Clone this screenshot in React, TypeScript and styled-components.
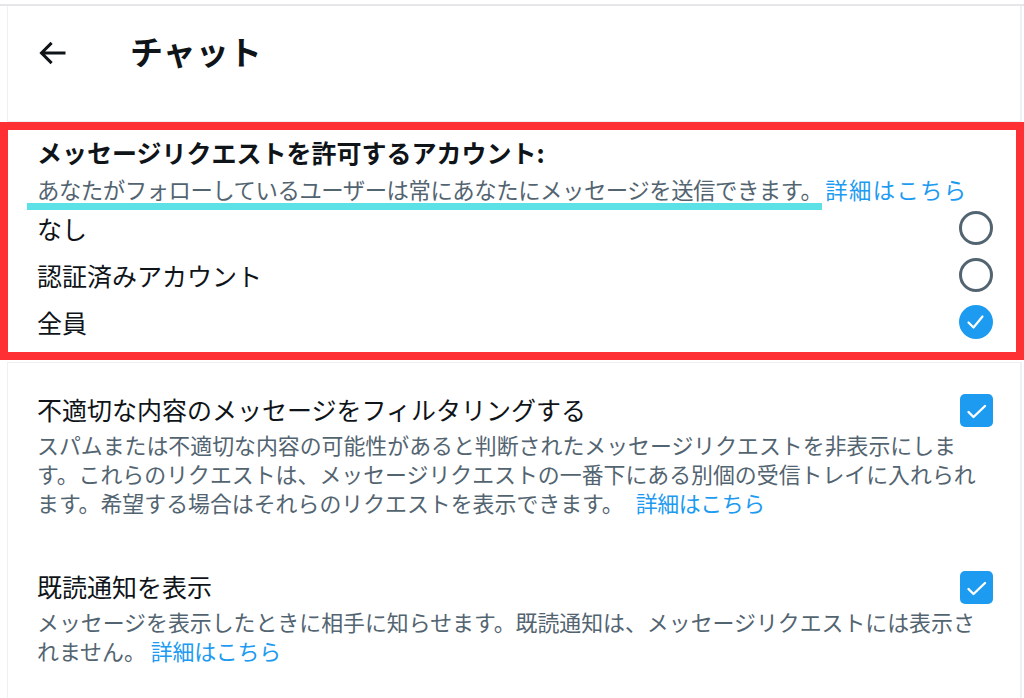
import React from "react";
import styled, { createGlobalStyle } from "styled-components";

const GlobalStyle = createGlobalStyle`
  *, *::before, *::after { box-sizing: border-box; }
  html, body { margin: 0; padding: 0; background: #ffffff; }
  body {
    font-family: "Noto Sans CJK JP", "Noto Sans", sans-serif;
    color: #0f1419;
  }
`;

const Page = styled.div`
  width: 1024px;
  min-height: 698px;
  padding-top: 4px;
  display: flex;
  flex-direction: column;
`;

const Viewport = styled.div`
  flex: 1;
  display: flex;
  flex-direction: column;
  border-top: 2px solid #e4e6e8;
`;

const Header = styled.header`
  margin: 0 2px 0 7px;
  height: 116px;
  border-left: 1px solid #eef1f3;
  border-right: 2px solid #eef1f3;
  border-bottom: 1px solid #eef1f3;
  padding: 25px 0 0 26px;
  display: flex;
  align-items: flex-start;
`;

const HeaderRow = styled.div`
  height: 40px;
  display: flex;
  align-items: center;
  gap: 60px;
`;

const BackIcon = styled.svg`
  width: 36px;
  height: 36px;
  margin-top: 4px;
  fill: #0f1419;
  flex: none;
`;

const Title = styled.h1`
  margin: 0;
  font-size: 33px;
  line-height: 40px;
  font-weight: 700;
  color: #0f1419;
`;

const Highlighted = styled.section`
  border: 8px solid #fe3033;
  padding: 5px 23px 7px 29px;
  display: flex;
  flex-direction: column;
`;

const GroupHeading = styled.h2`
  margin: 0;
  font-size: 25px;
  line-height: 34px;
  font-weight: 700;
  color: #0f1419;
`;

const GroupNote = styled.p`
  margin: 5px 0 0;
  font-size: 22.4px;
  line-height: 30px;
  color: #536471;
  white-space: nowrap;
`;

const Marked = styled.span`
  display: inline-block;
  position: relative;
  letter-spacing: -0.47px;
  &::after {
    content: "";
    position: absolute;
    left: -10px;
    right: 0;
    top: 29px;
    height: 7px;
    background: #5ce1e6;
  }
`;

const Link = styled.a<{ $gap: number; $track: number }>`
  color: #1d9bf0;
  text-decoration: none;
  margin-left: ${(p) => p.$gap}px;
  letter-spacing: ${(p) => p.$track}px;
  cursor: pointer;
`;

const Options = styled.div`
  display: flex;
  flex-direction: column;
`;

const OptionRow = styled.label`
  height: 47px;
  display: flex;
  align-items: center;
  justify-content: space-between;
  font-size: 25px;
  line-height: 34px;
  color: #0f1419;
`;

const RadioRing = styled.span`
  width: 34px;
  height: 34px;
  border-radius: 50%;
  border: 3px solid #536471;
  flex: none;
`;

const RadioOn = styled.svg`
  width: 34px;
  height: 34px;
  flex: none;
`;

const Lower = styled.div`
  flex: 1;
  margin: 2px 2px 0 7px;
  border-top: 1px solid #eef1f3;
  border-left: 1px solid #eef1f3;
  border-right: 2px solid #eef1f3;
  padding: 29px 27px 0 29px;
  display: flex;
  flex-direction: column;
  gap: 52px;
`;

const Setting = styled.div`
  display: flex;
  flex-direction: column;
`;

const SettingRow = styled.div`
  height: 34px;
  display: flex;
  align-items: center;
  justify-content: space-between;
`;

const SettingLabel = styled.span`
  font-size: 25px;
  line-height: 34px;
  color: #0f1419;
`;

const CheckBox = styled.svg`
  width: 33px;
  height: 33px;
  flex: none;
  margin-top: 2px;
`;

const Description = styled.p<{ $top: number }>`
  margin: ${(p) => p.$top}px 0 0;
  font-size: 21.9px;
  line-height: 29px;
  color: #536471;
`;

const Radio = ({ on }: { on: boolean }) =>
  on ? (
    <RadioOn viewBox="0 0 34 34">
      <circle cx="17" cy="17" r="17" fill="#1d9bf0" />
      <path
        d="M9.5 17.5 L14.5 22.5 L23.5 11.5"
        fill="none"
        stroke="#ffffff"
        strokeWidth="2.2"
        strokeLinecap="round"
        strokeLinejoin="round"
      />
    </RadioOn>
  ) : (
    <RadioRing />
  );

const Check = () => (
  <CheckBox viewBox="0 0 33 33">
    <rect x="0" y="0" width="33" height="33" rx="5" fill="#1d9bf0" />
    <path
      d="M8.5 18 L13.5 23 L25 12"
      fill="none"
      stroke="#ffffff"
      strokeWidth="2.4"
      strokeLinecap="round"
      strokeLinejoin="round"
    />
  </CheckBox>
);

const options = [
  { label: "なし", on: false },
  { label: "認証済みアカウント", on: false },
  { label: "全員", on: true },
];

export default function App() {
  return (
    <>
      <GlobalStyle />
      <Page>
        <Viewport>
          <Header>
            <HeaderRow>
              <BackIcon viewBox="0 0 24 24">
                <path d="M7.414 13l5.043 5.04-1.414 1.42L3.586 12l7.457-7.46 1.414 1.42L7.414 11H21v2H7.414z" />
              </BackIcon>
              <Title>チャット</Title>
            </HeaderRow>
          </Header>

          <Highlighted>
            <GroupHeading>メッセージリクエストを許可するアカウント:</GroupHeading>
            <GroupNote>
              <Marked>あなたがフォローしているユーザーは常にあなたにメッセージを送信できます。</Marked>
              <Link $gap={3} $track={1.3}>詳細はこちら</Link>
            </GroupNote>
            <Options>
              {options.map((o) => (
                <OptionRow key={o.label}>
                  <span>{o.label}</span>
                  <Radio on={o.on} />
                </OptionRow>
              ))}
            </Options>
          </Highlighted>

          <Lower>
            <Setting>
              <SettingRow>
                <SettingLabel>不適切な内容のメッセージをフィルタリングする</SettingLabel>
                <Check />
              </SettingRow>
              <Description $top={4}>
                スパムまたは不適切な内容の可能性があると判断されたメッセージリクエストを非表示にします。これらのリクエストは、メッセージリクエストの一番下にある別個の受信トレイに入れられます。希望する場合はそれらのリクエストを表示できます。
                <Link $gap={12} $track={-0.4}>詳細はこちら</Link>
              </Description>
            </Setting>
            <Setting>
              <SettingRow>
                <SettingLabel>既読通知を表示</SettingLabel>
                <Check />
              </SettingRow>
              <Description $top={4}>
                メッセージを表示したときに相手に知らせます。既読通知は、メッセージリクエストには表示されません。
                <Link $gap={5} $track={-0.2}>詳細はこちら</Link>
              </Description>
            </Setting>
          </Lower>
        </Viewport>
      </Page>
    </>
  );
}
